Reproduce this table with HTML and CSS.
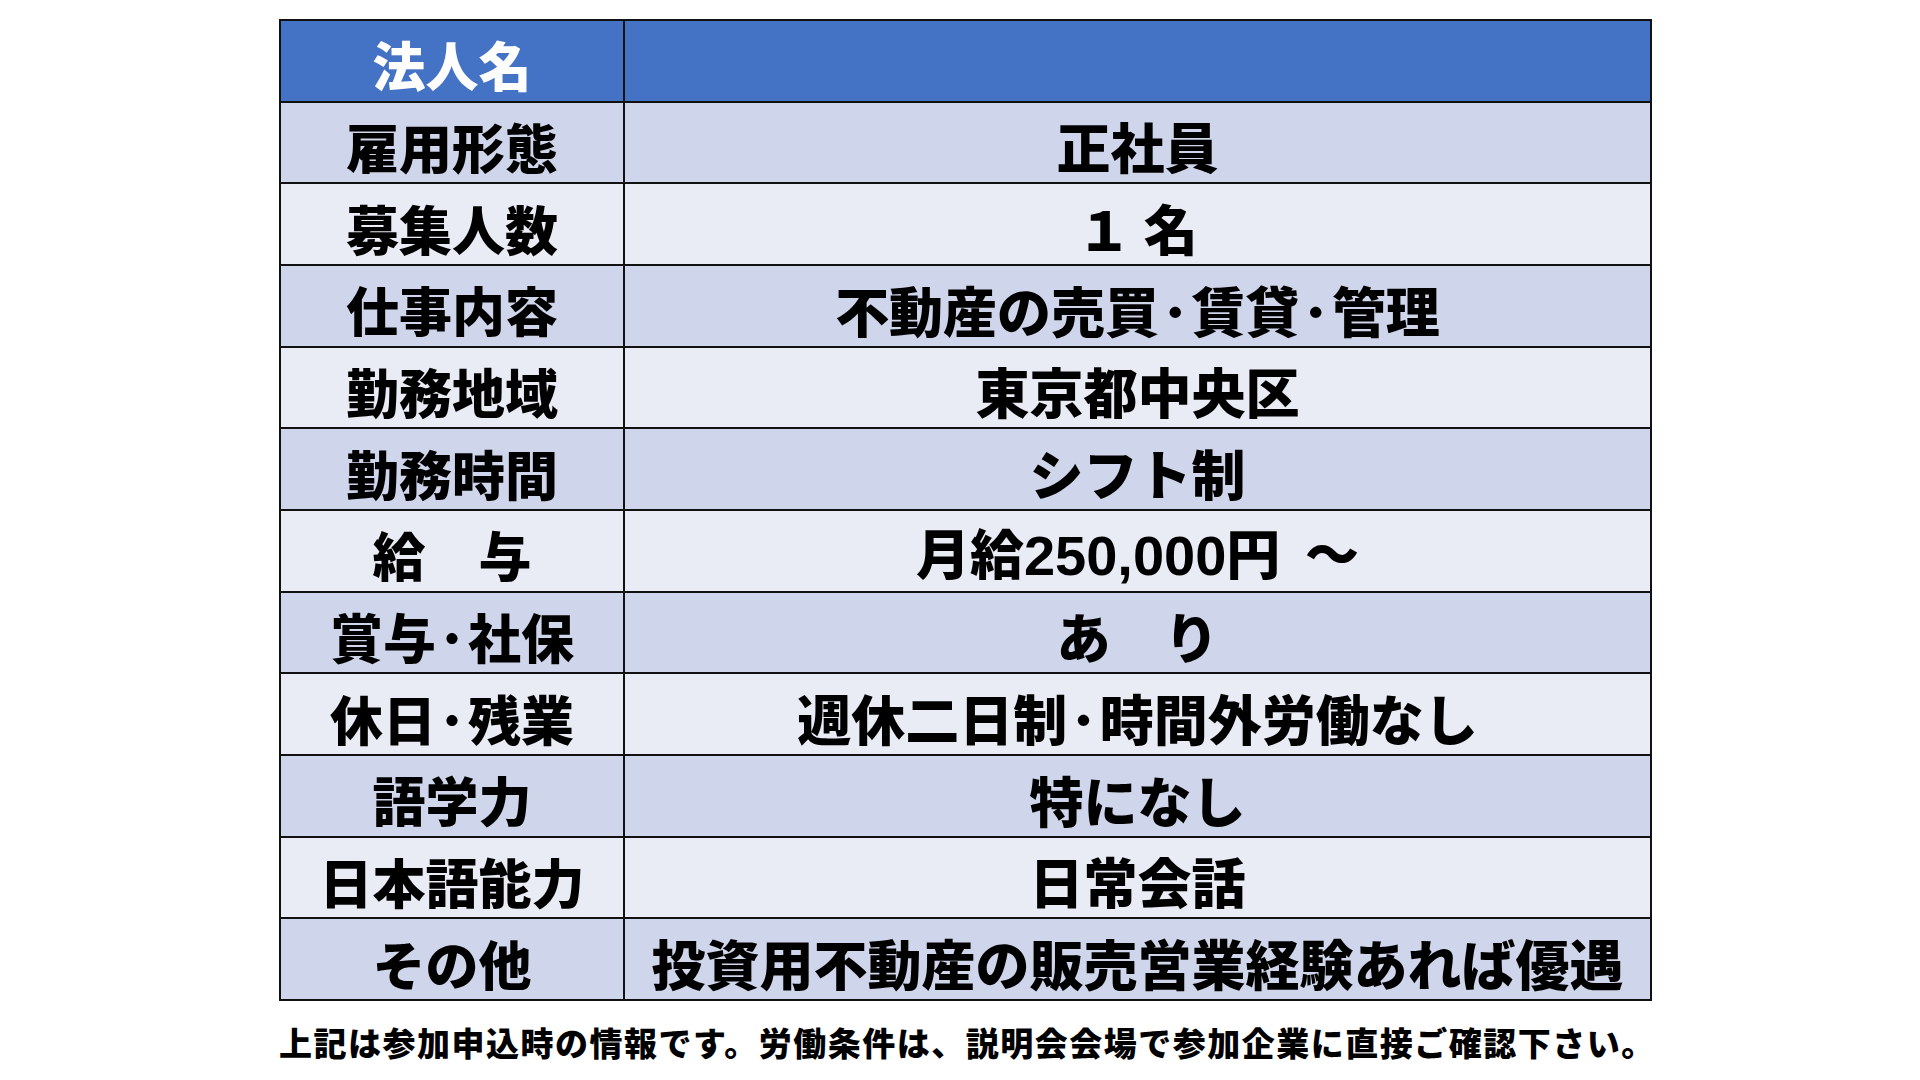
FILE: index.html
```html
<!DOCTYPE html>
<html lang="ja">
<head>
<meta charset="utf-8">
<title>募集要項</title>
<link rel="stylesheet" href="styles.css">
</head>
<body>
<div class="page">
  <table class="spec">
    <tr class="head"><th class="label">法人名</th><td class="value"></td></tr>
    <tr class="odd"><th class="label">雇用形態</th><td class="value">正社員</td></tr>
    <tr class="even"><th class="label">募集人数</th><td class="value">１ 名</td></tr>
    <tr class="odd"><th class="label">仕事内容</th><td class="value">不動産の売買<span class="dot">･</span>賃貸<span class="dot">･</span>管理</td></tr>
    <tr class="even"><th class="label">勤務地域</th><td class="value">東京都中央区</td></tr>
    <tr class="odd"><th class="label">勤務時間</th><td class="value">シフト制</td></tr>
    <tr class="even"><th class="label">給　与</th><td class="value">月給<span class="num">250,000</span>円 &nbsp;～</td></tr>
    <tr class="odd"><th class="label">賞与<span class="dot">･</span>社保</th><td class="value">あ　り</td></tr>
    <tr class="even"><th class="label">休日<span class="dot">･</span>残業</th><td class="value">週休二日制<span class="dot">･</span>時間外労働なし</td></tr>
    <tr class="odd"><th class="label">語学力</th><td class="value">特になし</td></tr>
    <tr class="even"><th class="label">日本語能力</th><td class="value">日常会話</td></tr>
    <tr class="odd"><th class="label">その他</th><td class="value">投資用不動産の販売営業経験あれば優遇</td></tr>
  </table>
  <p class="note">上記は参加申込時の情報です。労働条件は、説明会会場で参加企業に直接ご確認下さい。</p>
</div>
</body>
</html>
```

FILE: styles.css
```css
html, body {
  margin: 0;
  padding: 0;
  background: #ffffff;
}

body {
  font-family: "Noto Sans CJK JP", "Noto Sans", sans-serif;
  color: #000;
}

.page {
  display: flex;
  flex-direction: column;
  padding-top: 19px;
  padding-left: 279px;
  width: 1373px;
}

.spec {
  border-collapse: collapse;
  width: 1373px;
  table-layout: fixed;
  border: 2px solid #111;
}

.spec tr {
  height: 81.67px;
}

.spec th,
.spec td {
  border: 2px solid #111;
  padding: 8px 0 0 0;
  text-align: center;
  vertical-align: middle;
  font-weight: 900;
  line-height: 1;
  white-space: nowrap;
}

.label {
  width: 342px;
  font-size: 53px;
}

.value {
  font-size: 54px;
}

.dot {
  padding: 0 0.05em;
}

.num {
  font-family: "Liberation Sans", "Noto Sans", sans-serif;
  font-weight: 700;
  font-size: 56px;
}

.head th,
.head td {
  background: #4472c4;
  color: #ffffff;
}

.odd th,
.odd td {
  background: #cfd5ea;
}

.even th,
.even td {
  background: #e9ebf5;
}

.note {
  margin: 22px 0 0 0;
  font-size: 33px;
  font-weight: 900;
  line-height: 1.2;
  letter-spacing: 1.5px;
  white-space: nowrap;
}
```
